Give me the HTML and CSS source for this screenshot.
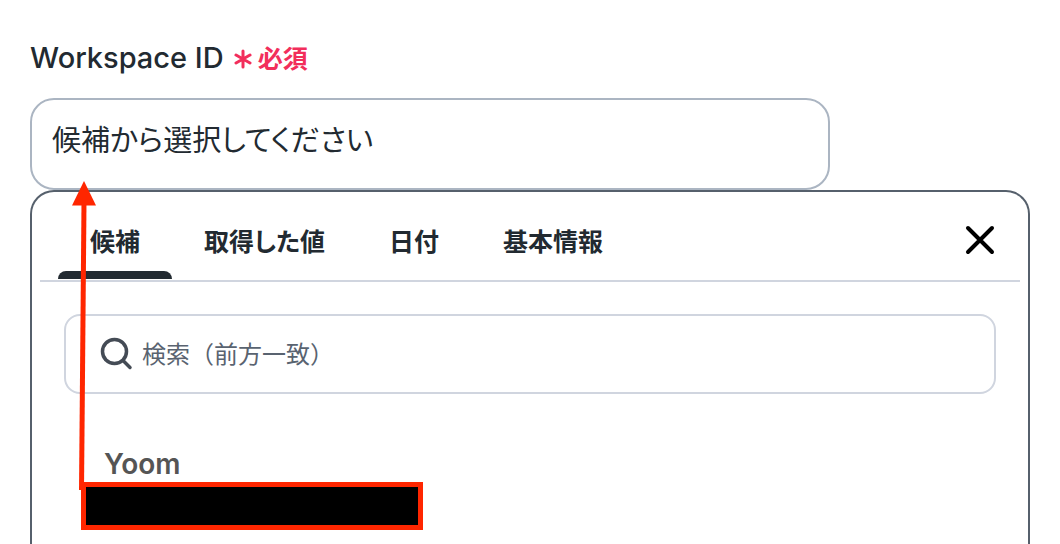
FILE: index.html
```html
<!DOCTYPE html>
<html lang="ja">
<head>
<meta charset="utf-8">
<title>Workspace ID</title>
<link rel="stylesheet" href="styles.css">
</head>
<body>
<main class="form">
  <div class="label-row">
    <label class="label" for="workspace">Workspace ID</label>
    <span class="required">
      <svg class="asterisk" viewBox="0 0 18 20" aria-hidden="true"><path d="M9 2v16M2 6l14 8M16 6L2 14"/></svg>
      必須
    </span>
  </div>
  <input class="field" id="workspace" type="text" role="combobox" aria-expanded="true" aria-controls="picker" value="候補から選択してください" readonly>
  <section class="picker" id="picker">
    <div class="picker-head">
      <div class="tabs" role="tablist">
        <button class="tab tab-active" type="button" role="tab" aria-selected="true">候補</button>
        <button class="tab" type="button" role="tab" aria-selected="false">取得した値</button>
        <button class="tab" type="button" role="tab" aria-selected="false">日付</button>
        <button class="tab" type="button" role="tab" aria-selected="false">基本情報</button>
      </div>
      <button class="close" type="button" aria-label="閉じる">
        <svg class="close-icon" viewBox="0 0 32 32" aria-hidden="true"><path d="M4 4l24 24M28 4L4 28"/></svg>
      </button>
    </div>
    <div class="search">
      <svg class="search-icon" viewBox="0 0 32 32" aria-hidden="true"><circle cx="14.500" cy="13.500" r="12"/><path d="M23 22.500L30 29.500"/></svg>
      <input class="search-input" type="search" aria-label="検索" placeholder="検索（前方一致）">
    </div>
    <div class="option">
      <div class="option-name">Yoom</div>
      <div class="redacted"></div>
    </div>
  </section>
  <svg class="arrow" viewBox="0 0 30 312" aria-hidden="true"><path d="M11.500 22H16.500L14 310H9z"/><path d="M14 1L26 25.500H2z"/></svg>
</main>
</body>
</html>
```

FILE: styles.css
```css
* {
  box-sizing: border-box;
}

body {
  margin: 0;
  background: #fff;
  color: #222a31;
  font-family: Inter, "Noto Sans CJK JP", sans-serif;
}

button,
input {
  font: inherit;
  color: inherit;
}

.form {
  position: relative;
  display: flex;
  flex-direction: column;
  min-height: 100vh;
  padding: 40px 30px 0;
}

.label-row {
  display: flex;
  align-items: center;
  gap: 10px;
  height: 34px;
  margin-bottom: 24px;
}

.label {
  font-size: 29px;
  font-weight: 500;
}

.required {
  display: flex;
  align-items: center;
  gap: 6px;
  color: #f22e5b;
  font-size: 25px;
  font-weight: 600;
}

.asterisk {
  width: 18px;
  height: 20px;
  margin-top: 4px;
  fill: none;
  stroke: currentColor;
  stroke-width: 3;
  stroke-linecap: round;
}

.field {
  width: 80%;
  height: 92px;
  padding: 0 20px 12px;
  border: 2px solid #abb5c2;
  border-radius: 24px;
  outline: none;
  background: #fff;
  font-size: 29px;
  font-feature-settings: "palt";
}

.picker {
  flex: 1;
  padding: 0 8px 12px;
  border: 2px solid #56606c;
  border-bottom: 0;
  border-radius: 24px 24px 0 0;
}

.picker-head {
  display: flex;
  justify-content: space-between;
  padding: 0 18px;
  border-bottom: 2px solid #d0d5df;
}

.tabs {
  display: flex;
}

.tab {
  position: relative;
  height: 88px;
  padding: 12px 32px 0;
  border: 0;
  background: none;
  font-size: 25px;
  font-weight: 600;
  line-height: 74px;
  font-feature-settings: "palt";
}

.tab-active::after {
  content: "";
  position: absolute;
  right: 0;
  bottom: 1px;
  left: 0;
  height: 8px;
  border-radius: 8px 8px 0 0;
  background: #222a31;
}

.close {
  display: flex;
  align-items: center;
  padding: 8px 6px 0;
  border: 0;
  background: none;
}

.close-icon {
  width: 32px;
  height: 32px;
  fill: none;
  stroke: #000;
  stroke-width: 4;
  stroke-linecap: round;
}

.search {
  display: flex;
  align-items: center;
  gap: 10px;
  height: 80px;
  margin: 32px 24px 0;
  padding: 0 34px;
  border: 2px solid #d0d5df;
  border-radius: 16px;
}

.search-icon {
  width: 32px;
  height: 32px;
  overflow: visible;
  fill: none;
  stroke: #444b55;
  stroke-width: 3.5;
  stroke-linecap: round;
}

.search-input {
  flex: 1;
  min-width: 0;
  padding: 0;
  border: 0;
  outline: none;
  background: none;
  font-size: 24px;
}

.search-input::placeholder {
  color: #596370;
}

.option {
  padding: 52px 41px 0;
}

.option-name {
  padding-left: 23px;
  color: #555;
  font-size: 28px;
  font-weight: 600;
  line-height: 36px;
}

.redacted {
  width: 342px;
  height: 48px;
  border: 5px solid #ff2600;
  background: #000;
}

.arrow {
  position: absolute;
  top: 180px;
  left: 70px;
  width: 30px;
  height: 312px;
  fill: #ff2600;
}
```
